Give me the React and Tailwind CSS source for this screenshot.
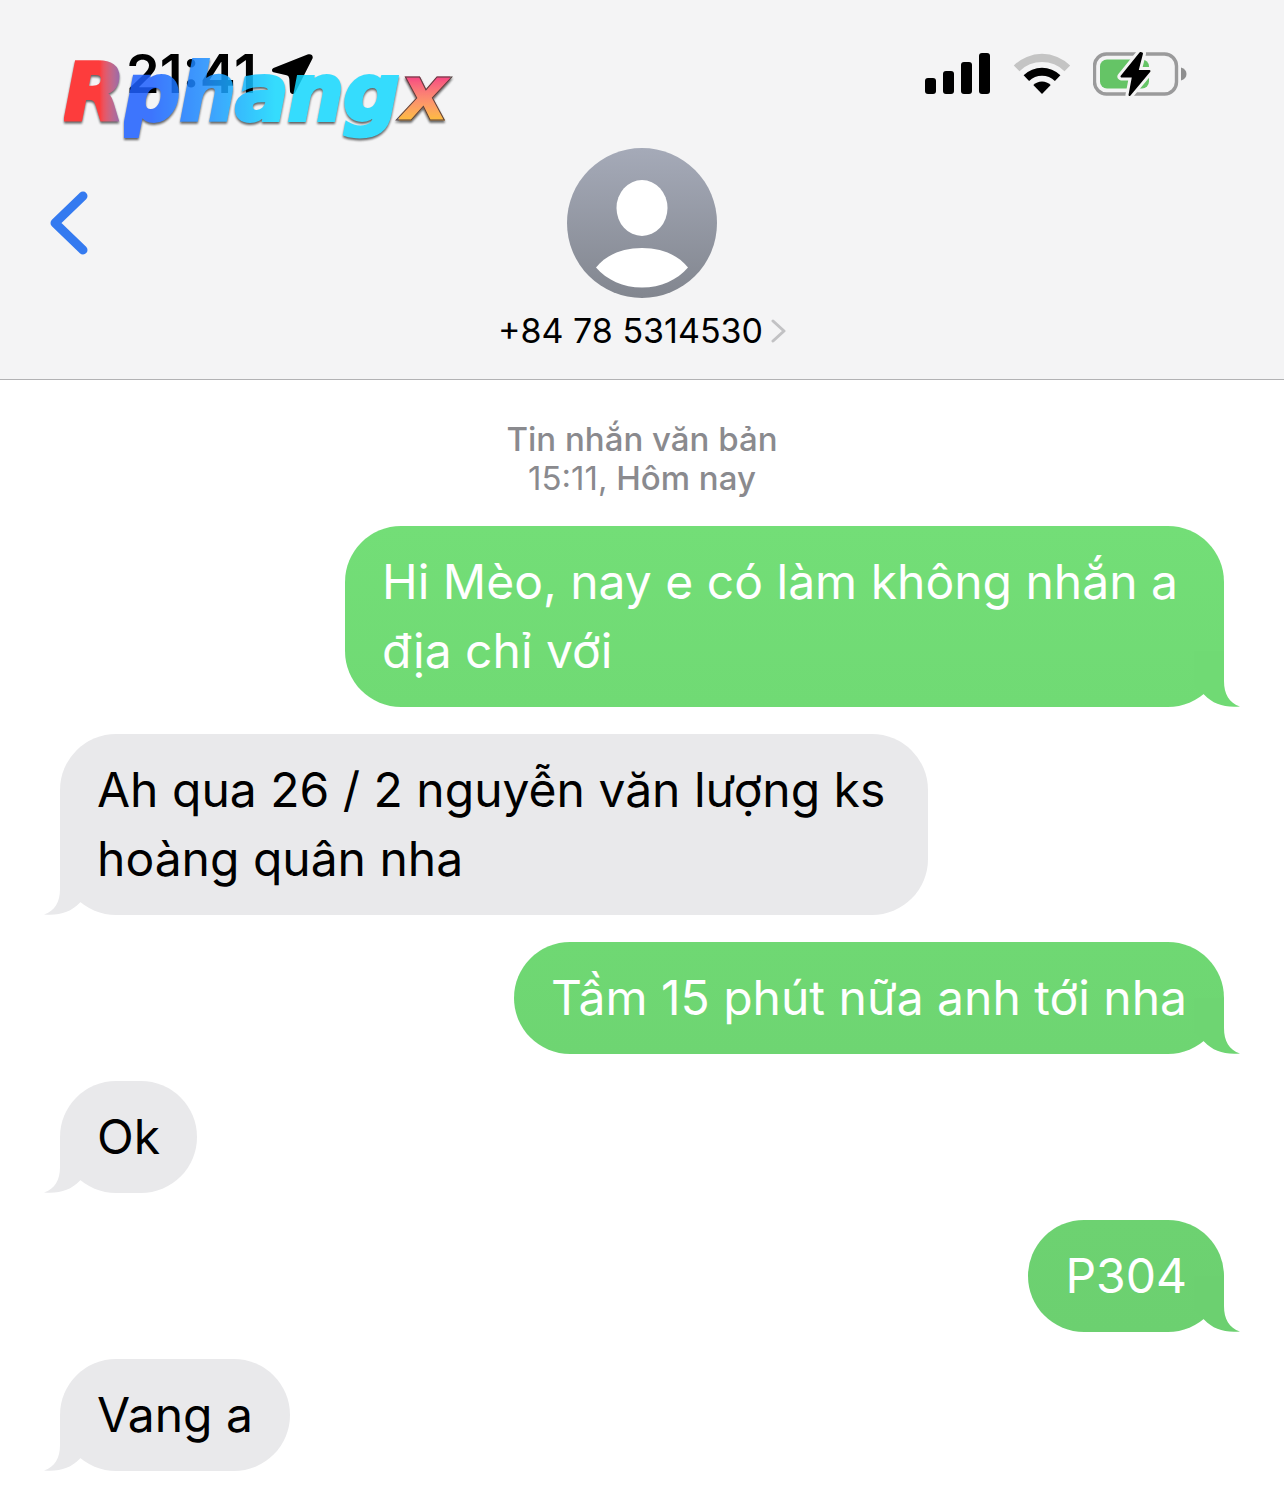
const messages = [
  { id: 1, sent: true, text: 'Hi Mèo, nay e có làm không nhắn a địa chỉ với', tone: 'from-[#73de77] to-[#70da74] text-[#70da74]' },
  { id: 2, sent: false, text: 'Ah qua 26 / 2 nguyễn văn lượng ks hoàng quân nha' },
  { id: 3, sent: true, text: 'Tầm 15 phút nữa anh tới nha', tone: 'from-[#6fd873] to-[#6ed572] text-[#6ed572]' },
  { id: 4, sent: false, text: 'Ok' },
  { id: 5, sent: true, text: 'P304', tone: 'from-[#6dd271] to-[#6cd070] text-[#6cd070]' },
  { id: 6, sent: false, text: 'Vang a' },
];

function LocationArrow() {
  return (
    <svg width="42" height="42" viewBox="0 0 42 42" aria-hidden="true">
      <path
        d="M36.500 1.500 2.500 15C.5 16 .5 18.500 2.500 19.200L15.500 22.300C17.500 23 18 24 18.300 26L19 38.500C19.500 41.500 23 42 24.500 39L41.500 5.500C42.500 2.500 40 .2 36.500 1.500Z"
        fill="#000"
      />
    </svg>
  );
}

function SignalBars() {
  return (
    <svg width="66" height="42" viewBox="0 0 66 42" aria-hidden="true">
      <rect x="0" y="25" width="11" height="16" rx="3" />
      <rect x="18" y="18" width="11" height="23" rx="3" />
      <rect x="36" y="9" width="11" height="32" rx="3" />
      <rect x="54" y="0" width="11" height="41" rx="3" />
    </svg>
  );
}

function Wifi() {
  return (
    <svg width="58" height="42" viewBox="0 0 58 42" aria-hidden="true">
      <path d="M.8 12.500a40 40 0 0 1 56.400 0l-5.700 5.700a32 32 0 0 0-45 0Z" fill="#c4c4c4" />
      <path d="M10.600 22.300a26.500 26.500 0 0 1 36.800 0l-5.500 5.600a18.600 18.600 0 0 0-25.800 0Z" />
      <path d="M20.300 32a12.500 12.500 0 0 1 17.400 0L29 41Z" />
    </svg>
  );
}

function Battery() {
  const bolt = 'M47.500 2 28.500 25.500H40L36.500 44 56.500 20H44.500L49 2.500Z';
  return (
    <svg width="94" height="46" viewBox="0 0 94 46" aria-hidden="true">
      <rect x="1.500" y="3" width="82" height="40" rx="12" fill="none" stroke="#9a9a9b" strokeWidth="3.400" />
      <rect x="7" y="8.500" width="49" height="29" rx="7" fill="#65c466" />
      <path d="M88 16.500c3.500 1 5.500 3.500 5.500 6.500s-2 5.500-5.500 6.500Z" fill="#8e8e8f" />
      <path d={bolt} fill="#f4f4f4" stroke="#f4f4f4" strokeWidth="8" strokeLinejoin="round" />
      <path d={bolt} fill="#000" stroke="#000" strokeWidth="2" strokeLinejoin="round" />
    </svg>
  );
}

function Avatar() {
  return (
    <svg width="150" height="150" viewBox="0 0 150 150" aria-hidden="true">
      <defs>
        <linearGradient id="avatar" x1="0" y1="0" x2="0" y2="1">
          <stop offset="0" stopColor="#a5aab8" />
          <stop offset="1" stopColor="#82868f" />
        </linearGradient>
      </defs>
      <circle cx="75" cy="75" r="75" fill="url(#avatar)" />
      <ellipse cx="75" cy="60" rx="25.500" ry="28" fill="#fff" />
      <path d="M29 119.500C39 107 55 100 75 100s36 7 46 19.500C110 132 94 139.500 75 139.500S40 132 29 119.500Z" fill="#fff" />
    </svg>
  );
}

function Logo() {
  return (
    <div className="absolute left-16 top-[41px] flex items-baseline whitespace-nowrap font-['DejaVu_Sans',sans-serif] text-[78px] leading-[104px] font-bold italic text-transparent drop-shadow-[0_2px_1px_rgb(0_0_0/0.7)] opacity-85">
      <span className="bg-linear-to-r from-[#ff1c1c] from-60% to-[#7050b0] bg-clip-text [-webkit-text-stroke:4px_transparent]">R</span>
      <span className="bg-linear-to-r from-[#1e60ff] from-10% via-[#2090ff] via-30% to-[#14d8ff] to-55% bg-clip-text [-webkit-text-stroke:4px_transparent]">phang</span>
      <span className="bg-linear-to-b from-[#f8286e] from-35% to-[#ffb020] to-75% bg-clip-text [-webkit-text-stroke:1px_#3a2020]">x</span>
    </div>
  );
}

function Tail({ sent }) {
  return (
    <svg
      width="46"
      height="56"
      viewBox="0 0 46 56"
      className={sent ? 'absolute bottom-0 -right-4' : 'absolute bottom-0 -left-4 -scale-x-100'}
      aria-hidden="true"
    >
      <path d="M0 0H30V30C30 43 35 52 46 55.500C31 57 19 53 10.500 44L0 34Z" fill="currentColor" />
    </svg>
  );
}

function Bubble({ message }) {
  const { sent, text, tone } = message;
  return (
    <li
      className={`relative rounded-[56px] px-[37px] pt-[21px] pb-[22px] text-[48px] leading-[69px] ${
        sent
          ? `max-w-[879px] self-end bg-linear-to-b ${tone}`
          : 'max-w-[868px] self-start bg-[#e9e9eb] text-[#e9e9eb]'
      }`}
    >
      <Tail sent={sent} />
      <p className={sent ? 'relative text-white' : 'relative text-black'}>{text}</p>
    </li>
  );
}

export default function App() {
  return (
    <div className="min-h-screen bg-white font-[Inter,sans-serif] text-black">
      <header className="relative border-b border-[#b2b2b4] bg-[#f4f4f5] pb-[27px]">
        <div className="flex items-center justify-between pt-[50px] pr-[97px] pl-[126px]">
          <div className="flex items-center gap-[14px]">
            <time className="text-[54px] leading-[48px] font-semibold">21:41</time>
            <LocationArrow />
          </div>
          <div className="flex items-center gap-[22px]">
            <SignalBars />
            <Wifi />
            <Battery />
          </div>
        </div>
        <Logo />

        <div className="grid grid-cols-[1fr_auto_1fr] items-start px-[49px] pt-[50px]">
          <button type="button" aria-label="Quay lại" className="mt-[43px] justify-self-start">
            <svg width="40" height="64" viewBox="0 0 40 64" fill="none" aria-hidden="true">
              <path d="M34 5 6 32 34 59" stroke="#347af0" strokeWidth="9" strokeLinecap="round" strokeLinejoin="round" />
            </svg>
          </button>
          <button type="button" className="flex flex-col items-center gap-3">
            <Avatar />
            <span className="flex items-center gap-2 text-[34px] leading-[42px]">
              +84 78 5314530
              <svg width="15" height="24" viewBox="0 0 15 24" fill="none" aria-hidden="true">
                <path d="M2 2 13 12 2 22" stroke="#c2c2c4" strokeWidth="3" strokeLinecap="round" strokeLinejoin="round" />
              </svg>
            </span>
          </button>
        </div>
      </header>

      <main className="px-[60px] pt-10 pb-4">
        <p className="text-center text-[33px] leading-[39px] font-medium text-[#8a8a8e]">
          Tin nhắn văn bản
          <br />
          <span className="font-normal">15:11,</span> Hôm nay
        </p>
        <ul className="mt-7 flex flex-col gap-[27px]">
          {messages.map((message) => (
            <Bubble key={message.id} message={message} />
          ))}
        </ul>
      </main>
    </div>
  );
}
